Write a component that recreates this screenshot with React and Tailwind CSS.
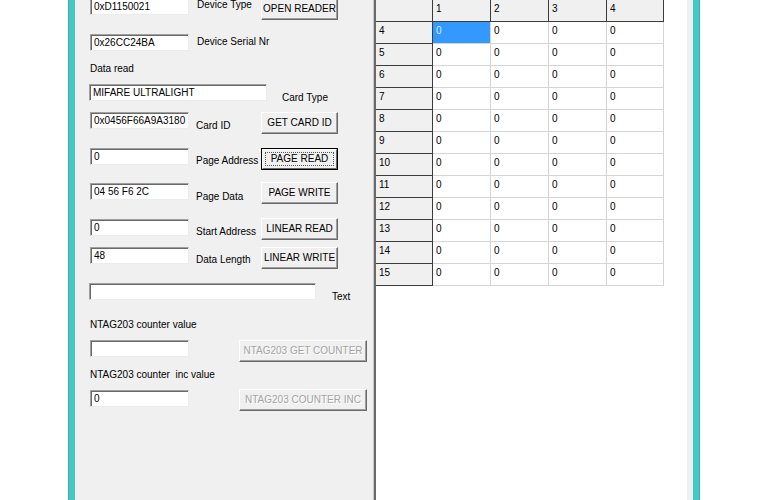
import React from 'react';

const font = { fontFamily: '"Liberation Sans", Arial, sans-serif' };

function Field({ value = '', w = 'w-[99px]', mt = 'mt-0' }) {
  return (
    <div
      className={`${w} ${mt} h-[17px] shrink-0 bg-white border border-t-[#a0a0a0] border-l-[#a0a0a0] border-b-[#ececec] border-r-[#ececec] shadow-[inset_1px_1px_0_#696969] pl-[3px] pt-[1px] text-[10px] leading-[14px] text-black whitespace-nowrap overflow-hidden`}
    >
      {value}
    </div>
  );
}

function Label({ children, mt = 'mt-0', w = 'w-[65px]', ml = 'ml-[7px]' }) {
  return (
    <div className={`${w} ${mt} ${ml} shrink-0 text-[10px] leading-[13px] text-black whitespace-nowrap`}>
      {children}
    </div>
  );
}

function Btn({ children, w = 'w-[77px]', disabled, focused, ml = 'ml-0' }) {
  if (focused) {
    return (
      <div className={`${w} ${ml} h-[22px] shrink-0 border border-black`}>
        <div className="h-full bg-[#f0f0f0] border-t border-l border-t-white border-l-white border-b border-r border-b-[#696969] border-r-[#696969] p-[2px]">
          <div className="h-full border border-dotted border-[#555555] flex items-center justify-center text-[10px] leading-none text-black whitespace-nowrap">
            {children}
          </div>
        </div>
      </div>
    );
  }
  return (
    <div
      className={`${w} ${ml} h-[22px] shrink-0 bg-[#f0f0f0] border-t border-l border-t-white border-l-white border-b border-r border-b-[#696969] border-r-[#696969] shadow-[inset_-1px_-1px_0_#a0a0a0] flex items-center justify-center text-[10px] leading-none whitespace-nowrap ${
        disabled ? 'text-[#a3a3a3] [text-shadow:1px_1px_0_#ffffff]' : 'text-black'
      }`}
    >
      {children}
    </div>
  );
}

const rowNums = [4, 5, 6, 7, 8, 9, 10, 11, 12, 13, 14, 15];

export default function App() {
  return (
    <div className="w-[768px] h-[500px] bg-white flex overflow-hidden" style={font}>
      <div className="w-[68px] shrink-0" />
      <div className="w-[7px] shrink-0 bg-[#45c7c7] border-l border-[#33b3b3]" />

      <div className="w-[618px] shrink-0 bg-[#f0f0f0] flex">
        {/* left form */}
        <div className="w-[299px] shrink-0 pl-[15px] flex flex-col">
          <div className="flex items-start h-[24px] -mt-[2px]">
            <Field value="0xD1150021" />
            <Label ml="ml-[8px]" w="w-[64px]">Device Type</Label>
            <Btn>OPEN READER</Btn>
          </div>

          <div className="flex items-start h-[17px] mt-[12px]">
            <Field value="0x26CC24BA" />
            <Label ml="ml-[8px]" mt="mt-[1px]" w="w-[90px]">Device Serial Nr</Label>
          </div>

          <div className="mt-[11px] h-[13px] text-[10px] leading-[13px]">Data read</div>

          <div className="flex items-start h-[20px] mt-[9px] -ml-[1px]">
            <Field value="MIFARE ULTRALIGHT" w="w-[178px]" />
            <Label ml="ml-[15px]" mt="mt-[7px]" w="w-[60px]">Card Type</Label>
          </div>

          <div className="flex items-start h-[22px] mt-[8px]">
            <Field value="0x0456F66A9A3180" />
            <Label mt="mt-[7px]">Card ID</Label>
            <Btn>GET CARD ID</Btn>
          </div>

          <div className="flex items-start h-[22px] mt-[14px]">
            <Field value="0" />
            <Label mt="mt-[6px]">Page Address</Label>
            <Btn focused>PAGE READ</Btn>
          </div>

          <div className="flex items-start h-[22px] mt-[12px]">
            <Field value="04 56 F6 2C" mt="mt-[1px]" />
            <Label mt="mt-[8px]">Page Data</Label>
            <Btn>PAGE WRITE</Btn>
          </div>

          <div className="flex items-start h-[22px] mt-[14px]">
            <Field value="0" mt="mt-[1px]" />
            <Label mt="mt-[7px]">Start Address</Label>
            <Btn>LINEAR READ</Btn>
          </div>

          <div className="flex items-start h-[22px] mt-[7px]">
            <Field value="48" />
            <Label mt="mt-[6px]">Data Length</Label>
            <Btn>LINEAR WRITE</Btn>
          </div>

          <div className="flex items-start h-[20px] mt-[14px] -ml-[1px]">
            <Field w="w-[227px]" />
            <Label ml="ml-[16px]" mt="mt-[7px]" w="w-[30px]">Text</Label>
          </div>

          <div className="mt-[15px] h-[13px] text-[10px] leading-[13px] whitespace-nowrap">
            NTAG203 counter value
          </div>

          <div className="flex items-start h-[22px] mt-[9px]">
            <Field />
            <Btn disabled w="w-[128px]" ml="ml-[50px]">NTAG203 GET COUNTER</Btn>
          </div>

          <div className="mt-[6px] h-[13px] text-[10px] leading-[13px] whitespace-pre">
            NTAG203 counter  inc value
          </div>

          <div className="flex items-start h-[22px] mt-[8px]">
            <Field value="0" mt="mt-[1px]" />
            <Btn disabled w="w-[128px]" ml="ml-[50px]">NTAG203 COUNTER INC</Btn>
          </div>
        </div>

        {/* grid */}
        <div className="w-[313px] shrink-0 bg-white border-l-2 border-[#6a6a6a] shadow-[-1px_0_0_#c8c8c8]">
          <div className="grid grid-cols-[57px_58px_58px_58px_57px] auto-rows-[22px] w-[288px] text-[10px] leading-[13px] text-black">
            <div className="bg-[#f0f0f0] border-r border-b border-[#3c3c3c]" />
            {['1', '2', '3', '4'].map(h => (
              <div key={h} className="bg-[#f0f0f0] border-r border-b border-[#3c3c3c] pl-[3px] pt-[2px]">
                {h}
              </div>
            ))}
            {rowNums.map(r => (
              <React.Fragment key={r}>
                <div className="bg-[#f0f0f0] border-r border-b border-[#3c3c3c] pl-[3px] pt-[2px]">
                  {r}
                </div>
                {[0, 1, 2, 3].map(c =>
                  r === 4 && c === 0 ? (
                    <div key={c} className="bg-[#3399ff] text-[#dcecff] border-r border-b border-[#d4d4d4] pl-[3px] pt-[2px]">
                      0
                    </div>
                  ) : (
                    <div key={c} className="bg-white border-r border-b border-[#d4d4d4] pl-[3px] pt-[2px]">
                      0
                    </div>
                  )
                )}
              </React.Fragment>
            ))}
          </div>
        </div>
        <div className="flex-1" />
      </div>

      <div className="w-[7px] shrink-0 bg-[#45c7c7] border-r border-[#33b3b3]" />
      <div className="flex-1" />
    </div>
  );
}
